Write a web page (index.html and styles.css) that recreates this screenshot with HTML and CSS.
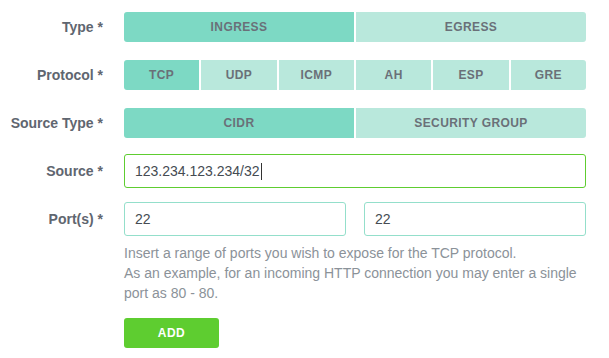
FILE: index.html
```html
<!DOCTYPE html>
<html lang="en">
<head>
  <meta charset="UTF-8">
  <title>Add Rule</title>
  <link rel="stylesheet" href="styles.css">
</head>
<body>
  <form class="rule-form">

    <!-- Type -->
    <div class="row">
      <label class="label">Type *</label>
      <div class="toggle cols-2">
        <button type="button" class="toggle-btn active">INGRESS</button>
        <button type="button" class="toggle-btn">EGRESS</button>
      </div>
    </div>

    <!-- Protocol -->
    <div class="row">
      <label class="label">Protocol *</label>
      <div class="toggle cols-6">
        <button type="button" class="toggle-btn active">TCP</button>
        <button type="button" class="toggle-btn">UDP</button>
        <button type="button" class="toggle-btn">ICMP</button>
        <button type="button" class="toggle-btn">AH</button>
        <button type="button" class="toggle-btn">ESP</button>
        <button type="button" class="toggle-btn">GRE</button>
      </div>
    </div>

    <!-- Source type -->
    <div class="row">
      <label class="label">Source Type *</label>
      <div class="toggle cols-2">
        <button type="button" class="toggle-btn active">CIDR</button>
        <button type="button" class="toggle-btn">SECURITY GROUP</button>
      </div>
    </div>

    <!-- Source -->
    <div class="row">
      <label class="label">Source *</label>
      <div class="field focused">123.234.123.234/32<span class="caret"></span></div>
    </div>

    <!-- Ports -->
    <div class="row">
      <label class="label">Port(s) *</label>
      <div class="ports">
        <input class="field" type="text" value="22">
        <input class="field" type="text" value="22">
      </div>
    </div>

    <div class="row top">
      <span class="label"></span>
      <div class="help">
        <p>Insert a range of ports you wish to expose for the TCP protocol.</p>
        <p>As an example, for an incoming HTTP connection you may enter a single port as 80 - 80.</p>
        <button type="button" class="add-btn">ADD</button>
      </div>
    </div>

  </form>
</body>
</html>
```

FILE: styles.css
```css
* {
  box-sizing: border-box;
  margin: 0;
  padding: 0;
}

body {
  font-family: "Liberation Sans", Arial, sans-serif;
  background-color: #fff;
}

.rule-form {
  display: flex;
  flex-direction: column;
  gap: 18px;
  padding-top: 12px;
  width: 586px;
}

.row {
  display: flex;
  align-items: center;
  gap: 21px;
  height: 30px;
}

.row.top {
  align-items: flex-start;
  height: auto;
}

.label {
  width: 103px;
  flex-shrink: 0;
  text-align: right;
  font-size: 14px;
  font-weight: bold;
  color: #5f6670;
}

.toggle {
  flex: 1;
  display: grid;
  gap: 2px;
  height: 30px;
  border-radius: 3px;
  overflow: hidden;
}

.cols-2 {
  grid-template-columns: repeat(2, 1fr);
}

.cols-6 {
  grid-template-columns: repeat(6, 1fr);
}

.toggle-btn {
  border: none;
  background-color: #b9e8dc;
  color: #6a7078;
  font-family: inherit;
  font-size: 12px;
  font-weight: bold;
  letter-spacing: 0.4px;
  cursor: pointer;
}

.toggle-btn.active {
  background-color: #7dd9c4;
}

.field {
  flex: 1;
  height: 34px;
  border: 1px solid #94dfcb;
  border-radius: 3px;
  padding: 0 10px;
  font-family: inherit;
  font-size: 14px;
  color: #454b52;
  display: flex;
  align-items: center;
  min-width: 0;
}

.field.focused {
  border-color: #5ecd30;
}

.caret {
  display: inline-block;
  width: 1px;
  height: 17px;
  background-color: #333;
  margin-left: 1px;
}

.ports {
  flex: 1;
  display: flex;
  gap: 18px;
}

.help {
  flex: 1;
  margin-top: -9px;
  font-size: 14px;
  line-height: 20px;
  color: #8b9299;
}

.add-btn {
  display: block;
  margin-top: 15px;
  width: 95px;
  height: 30px;
  border: none;
  border-radius: 3px;
  background-color: #5ecd30;
  color: #fff;
  font-family: inherit;
  font-size: 12px;
  font-weight: bold;
  letter-spacing: 0.5px;
  cursor: pointer;
}
```
